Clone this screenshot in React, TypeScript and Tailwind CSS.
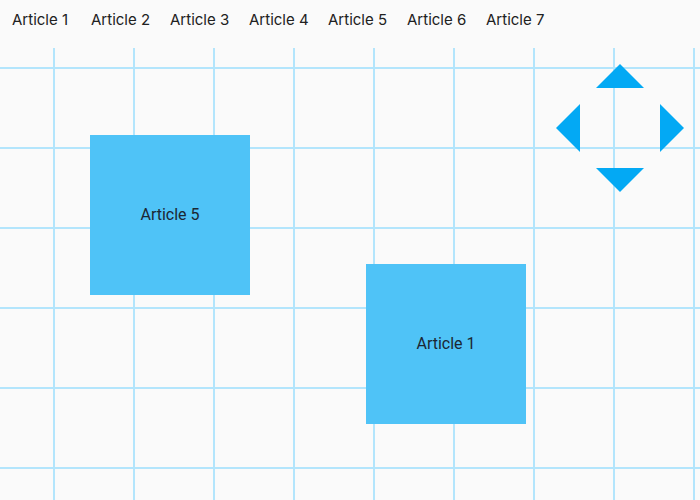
const ARTICLES = ["Article 1", "Article 2", "Article 3", "Article 4", "Article 5", "Article 6", "Article 7"];

type Card = { label: string; x: number; y: number };

// positions on the canvas (canvas starts below the 48px nav)
const CARDS: Card[] = [
  { label: "Article 5", x: 90, y: 87 },
  { label: "Article 1", x: 366, y: 216 },
];

function ArrowPad() {
  return (
    <div className="absolute left-[556px] top-[16px] grid grid-cols-[24px_48px_24px] grid-rows-[24px_48px_24px] gap-4">
      <div />
      <button className="h-0 w-0 border-x-[24px] border-b-[24px] border-x-transparent border-b-[#03a9f4]" />
      <div />
      <button className="h-0 w-0 border-y-[24px] border-r-[24px] border-y-transparent border-r-[#03a9f4]" />
      <div />
      <button className="h-0 w-0 border-y-[24px] border-l-[24px] border-y-transparent border-l-[#03a9f4]" />
      <div />
      <button className="h-0 w-0 border-x-[24px] border-t-[24px] border-x-transparent border-t-[#03a9f4]" />
      <div />
    </div>
  );
}

export default function App() {
  return (
    <div className="flex h-[500px] w-[700px] flex-col overflow-hidden bg-[#fafafa]">
      <nav className="flex h-[48px] shrink-0 items-start px-3 pt-[10px] font-['Inter',sans-serif] text-[15px] leading-5 text-[#212121]">
        {ARTICLES.map((a) => (
          <span key={a} className="w-[79px] shrink-0">
            {a}
          </span>
        ))}
      </nav>
      <div className="relative flex-1 bg-[linear-gradient(to_right,#b3e5fc_2px,transparent_2px),linear-gradient(to_bottom,#b3e5fc_2px,transparent_2px)] bg-[size:80px_80px] bg-[position:53px_19px]">
        {CARDS.map((c) => (
          <div
            key={c.label}
            className="absolute flex h-[160px] w-[160px] items-center justify-center bg-[#4fc3f7] font-['Roboto',sans-serif] text-[16px] text-[#1c2733]"
            style={{ left: c.x, top: c.y }}
          >
            {c.label}
          </div>
        ))}
        <ArrowPad />
      </div>
    </div>
  );
}
